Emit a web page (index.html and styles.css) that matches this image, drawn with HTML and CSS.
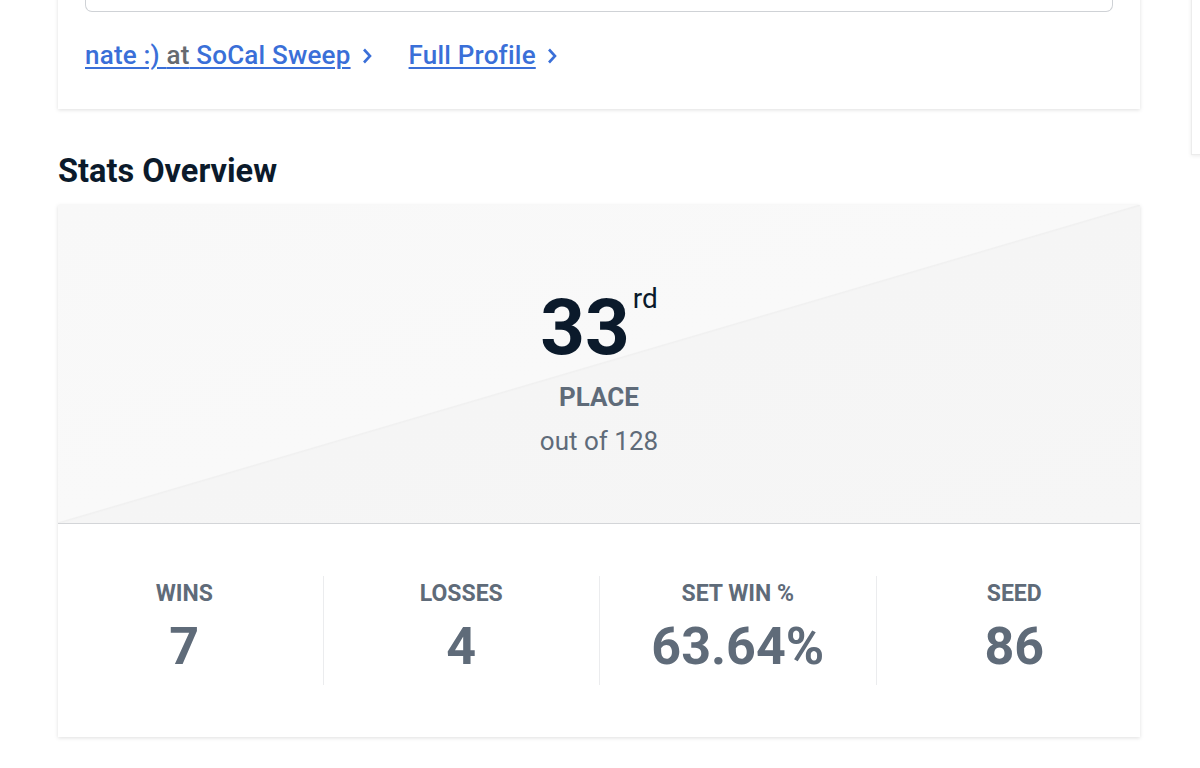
FILE: index.html
```html
<!DOCTYPE html>
<html lang="en">
<head>
<meta charset="utf-8">
<title>Stats Overview</title>
<link rel="stylesheet" href="styles.css">
</head>
<body>
<div class="side-card"></div>
<main class="page">
  <section class="card info-card">
    <div class="search-box"></div>
    <div class="links">
      <a class="link" href="#"><span class="link-text">nate :) <span class="muted">at</span> SoCal Sweep</span><svg class="chev" viewBox="0 0 10 16" width="10" height="16"><path d="M2 1.5 L8 8 L2 14.5" fill="none" stroke="currentColor" stroke-width="2.6"/></svg></a>
      <a class="link" href="#"><span class="link-text">Full Profile</span><svg class="chev" viewBox="0 0 10 16" width="10" height="16"><path d="M2 1.5 L8 8 L2 14.5" fill="none" stroke="currentColor" stroke-width="2.6"/></svg></a>
    </div>
  </section>

  <h2 class="section-title">Stats Overview</h2>

  <section class="card stats-card">
    <div class="placement">
      <div class="place-num">33<sup class="ordinal">rd</sup></div>
      <div class="place-label">PLACE</div>
      <div class="place-total">out of 128</div>
    </div>
    <div class="stats-row">
      <div class="stat">
        <div class="stat-label">WINS</div>
        <div class="stat-value">7</div>
      </div>
      <div class="stat">
        <div class="stat-label">LOSSES</div>
        <div class="stat-value">4</div>
      </div>
      <div class="stat">
        <div class="stat-label">SET WIN %</div>
        <div class="stat-value">63.64%</div>
      </div>
      <div class="stat">
        <div class="stat-label">SEED</div>
        <div class="stat-value">86</div>
      </div>
    </div>
  </section>
</main>
</body>
</html>
```

FILE: styles.css
```css
* { box-sizing: border-box; }
html, body {
  margin: 0;
  padding: 0;
  background: #ffffff;
  overflow: hidden;
}
body {
  font-family: Roboto, "Liberation Sans", Arial, sans-serif;
  color: #0b1a2b;
  height: 768px;
  position: relative;
}
.page {
  width: 1082px;
  margin-left: 58px;
}
.card {
  background: #ffffff;
  box-shadow: 0 1px 4px rgba(0, 0, 0, 0.13);
}
.side-card {
  position: absolute;
  left: 1191px;
  top: -20px;
  width: 40px;
  height: 175px;
  background: #fff;
  border: 1px solid #ececec;
  box-shadow: 0 1px 4px rgba(0, 0, 0, 0.08);
}
.info-card {
  margin-top: -60px;
  padding: 0 27px;
  height: 169px;
}
.search-box {
  height: 72px;
  border: 1px solid #cfd2d6;
  border-top: none;
  border-radius: 0 0 7px 7px;
}
.links {
  display: flex;
  gap: 37px;
  padding-top: 27px;
  padding-left: 0;
}
.link {
  display: inline-flex;
  align-items: center;
  gap: 11px;
  color: #3a6fd8;
  font-size: 26px;
  font-weight: 500;
  line-height: 32px;
  text-decoration: none;
  letter-spacing: 0.2px;
}
.link-text {
  text-decoration: underline;
  text-decoration-thickness: 2px;
  text-underline-offset: 3px;
}
.muted { color: #666a70; }
.chev { color: #3a6fd8; margin-top: 2px; }

.section-title {
  margin: 43px 0 0 0;
  font-size: 32.5px;
  font-weight: 700;
  line-height: 38px;
  color: #0b1a2b;
  letter-spacing: 0;
}
.stats-card {
  margin-top: 15px;
  overflow: hidden;
}
.placement {
  height: 319px;
  border-bottom: 1px solid #d3d5d8;
  background: linear-gradient(to bottom right, #f8f8f8 0%, #f9f9f9 49.8%, #f0f0f0 50%, #f5f5f5 50.3%, #f6f6f6 100%);
  display: flex;
  flex-direction: column;
  align-items: center;
  padding-top: 84px;
}
.place-num {
  font-size: 78px;
  font-weight: 700;
  line-height: 78px;
  color: #0b1a2b;
}
.ordinal {
  vertical-align: top;
  margin-left: 3px;
  font-size: 28px;
  font-weight: 400;
  line-height: 20px;
  color: #0b1a2b;
}
.place-label {
  margin-top: 14px;
  font-size: 26px;
  font-weight: 700;
  line-height: 32px;
  color: #5f6b79;
}
.place-total {
  margin-top: 12px;
  font-size: 26px;
  font-weight: 400;
  line-height: 32px;
  color: #5f6b79;
}
.stats-row {
  display: grid;
  grid-template-columns: repeat(4, 1fr);
  margin: 0 -12px;
  padding: 52px 0;
}
.stat {
  display: flex;
  flex-direction: column;
  align-items: center;
  height: 109px;
  padding-top: 5px;
}
.stat + .stat { border-left: 1px solid #ebecee; }
.stat-label {
  font-size: 23px;
  font-weight: 700;
  line-height: 26px;
  color: #5f6b79;
}
.stat-value {
  margin-top: 10px;
  font-size: 52px;
  font-weight: 700;
  line-height: 60px;
  color: #5f6b79;
}
```
